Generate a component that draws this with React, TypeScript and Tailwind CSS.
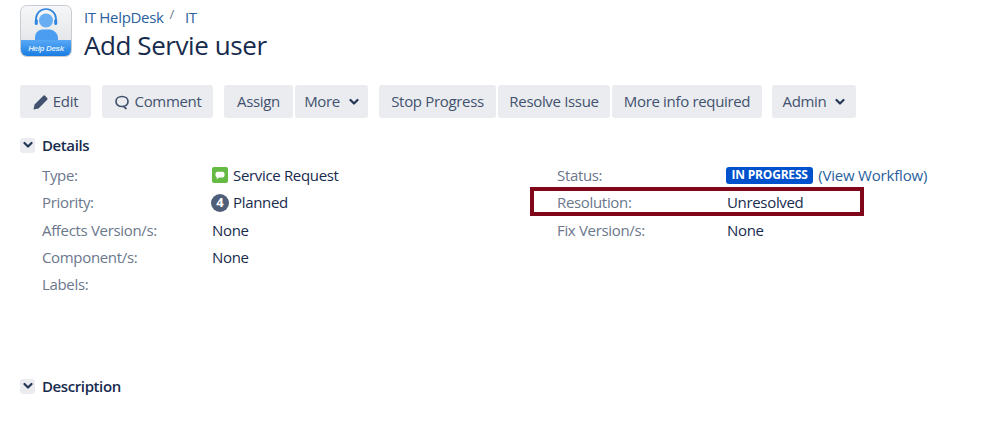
import React from "react";

const Chevron = ({ className = "" }: { className?: string }) => (
  <svg viewBox="0 0 10 8" className={className} fill="none" stroke="currentColor" strokeWidth="2.2" strokeLinecap="round" strokeLinejoin="round">
    <path d="M1.5 2 L5 5.5 L8.5 2" />
  </svg>
);

const Btn = ({ w, children, cls = "" }: { w: string; children: React.ReactNode; cls?: string }) => (
  <div className={`${w} h-[33px] bg-[#ebecf0] rounded-[3px] flex items-center justify-center text-[#42526e] text-[15px] ${cls}`}>{children}</div>
);

const Logo = () => (
  <svg viewBox="0 0 52 52" className="w-[52px] h-[52px] shrink-0">
    <defs>
      <linearGradient id="tile" x1="0" y1="0" x2="0" y2="1">
        <stop offset="0" stopColor="#f6f7f8" />
        <stop offset="1" stopColor="#dcdfe3" />
      </linearGradient>
      <linearGradient id="band" x1="0" y1="0" x2="0" y2="1">
        <stop offset="0" stopColor="#58a9f6" />
        <stop offset="1" stopColor="#1a7ce2" />
      </linearGradient>
    </defs>
    <rect x="0.5" y="0.5" width="51" height="51" rx="6" fill="url(#tile)" stroke="#c9ccd0" />
    <path d="M1 35 H51 V45 a6 6 0 0 1 -6 6 H7 a6 6 0 0 1 -6 -6 Z" fill="url(#band)" />
    <circle cx="26" cy="15.5" r="7" fill="#69aef2" />
    <path d="M16 18 V14 a10 10 0 0 1 20 0 V18" fill="none" stroke="#2f86e2" strokeWidth="1.7" />
    <rect x="14.8" y="14" width="3" height="6" rx="1.5" fill="#2f86e2" />
    <rect x="34.2" y="14" width="3" height="6" rx="1.5" fill="#2f86e2" />
    <path d="M15 35 V32 Q15 26 22 24.5 H30 Q37 26 38 32 V35 Z" fill="#4a9df0" />
    <text x="26" y="46" textAnchor="middle" fontSize="8" fontStyle="italic" fontWeight="700" fill="#d8eafb" fontFamily="'Liberation Sans', sans-serif">Help Desk</text>
  </svg>
);

const Row = ({ label, children, leftW = "w-[170px]" }: { label: string; children?: React.ReactNode; leftW?: string }) => (
  <div className="flex h-[27.3px] items-center">
    <div className={`${leftW} text-[#6b778c]`}>{label}</div>
    <div className="flex items-center text-[#172b4d]">{children}</div>
  </div>
);

const SectionHead = ({ title }: { title: string }) => (
  <div className="flex items-center h-[16px]">
    <div className="w-[15px] h-[15px] rounded-[3px] bg-[#ebecf0] flex items-center justify-center text-[#253858]">
      <Chevron className="w-[10px] h-[8px]" />
    </div>
    <span className="ml-[7px] text-[15px] font-semibold text-[#172b4d] tracking-[-0.4px]">{title}</span>
  </div>
);

export default function App() {
  return (
    <div className="w-[998px] h-[440px] bg-white overflow-hidden pl-5 pt-[5px] text-[15px] font-['Open_Sans','Noto_Sans',sans-serif] tracking-[-0.33px]">
      <div className="flex h-[52px]">
        <Logo />
        <div className="ml-3 flex flex-col">
          <div className="flex items-center h-[22px] mt-[1px] text-[15px] text-[#2a5f9e]">
            <span>IT HelpDesk</span>
            <span className="ml-[6px] text-[#6b778c] text-[13px] -mt-1">/</span>
            <span className="ml-[11px]">IT</span>
          </div>
          <div className="text-[26px] leading-[34px] font-medium text-[#172b4d] tracking-[-0.42px]">Add Servie user</div>
        </div>
      </div>

      <div className="flex mt-[28px] h-[33px]">
        <Btn w="w-[71px]">
          <svg viewBox="0 0 16 16" className="w-[16px] h-[16px] mr-[4px]" fill="#42526e">
            <path d="M0.5 15.5 L1.6 10.5 L10.3 1.8 a1.3 1.3 0 0 1 1.8 0 L14.2 3.9 a1.3 1.3 0 0 1 0 1.8 L5.5 14.4 Z" />
          </svg>
          Edit
        </Btn>
        <Btn w="w-[111px]" cls="ml-[11px]">
          <svg viewBox="0 0 16 16" className="w-[16px] h-[16px] mr-[5px]" fill="none" stroke="#42526e" strokeWidth="1.7" strokeLinecap="round" strokeLinejoin="round">
            <path d="M8 2.5 c3.6 0 6 2.1 6 5 s-2.4 5 -6 5 c-3.6 0 -6 -2.1 -6 -5 s2.4 -5 6 -5 Z M9.5 12.3 L12 14.5" />
          </svg>
          Comment
        </Btn>
        <Btn w="w-[69px]" cls="ml-[11px]">Assign</Btn>
        <Btn w="w-[73px]" cls="ml-[2px]">
          More
          <Chevron className="w-[10px] h-[8px] ml-[9px] text-[#253858]" />
        </Btn>
        <Btn w="w-[117px]" cls="ml-[11px]">Stop Progress</Btn>
        <Btn w="w-[112px]" cls="ml-[2px]">Resolve Issue</Btn>
        <Btn w="w-[150px]" cls="ml-[2px]">More info required</Btn>
        <Btn w="w-[84px]" cls="ml-[10px]">
          Admin
          <Chevron className="w-[10px] h-[8px] ml-[9px] text-[#253858]" />
        </Btn>
      </div>

      <div className="mt-[19px]">
        <SectionHead title="Details" />
      </div>

      <div className="relative flex pl-[22px] mt-[8.6px]">
        <div className="w-[515px]">
          <Row label="Type:">
            <span className="w-[16px] h-[16px] rounded-[2px] bg-[#65ba43] flex items-center justify-center mr-[5px]">
              <svg viewBox="0 0 10 9" className="w-[10px] h-[9px]" fill="#fff">
                <path d="M2.5 0.8 H7.5 a2 2 0 0 1 2 2 V4.5 a2 2 0 0 1 -2 2 H4 L1.8 8.2 V6.3 A2 2 0 0 1 0.5 4.5 V2.8 a2 2 0 0 1 2 -2 Z" />
              </svg>
            </span>
            Service Request
          </Row>
          <Row label="Priority:">
            <span className="w-[18px] h-[18px] -ml-[1px] rounded-full bg-[#505f79] text-white text-[13px] font-bold flex items-center justify-center mr-[4px] tracking-normal">4</span>
            Planned
          </Row>
          <Row label="Affects Version/s:">None</Row>
          <Row label="Component/s:">None</Row>
          <Row label="Labels:" />
        </div>
        <div>
          <Row label="Status:">
            <span className="h-[17px] -ml-[1px] px-[5.5px] rounded-[3px] bg-[#0052cc] text-white text-[12px] font-bold flex items-center tracking-[-0.2px]">IN PROGRESS</span>
            <span className="ml-[5px] text-[#2a5f9e] tracking-[-0.2px]">(View Workflow)</span>
          </Row>
          <Row label="Resolution:">Unresolved</Row>
          <Row label="Fix Version/s:">None</Row>
        </div>
        <div className="absolute left-[510px] top-[25.4px] w-[334px] h-[29px] border-4 border-[#80061a]" />
      </div>

      <div className="mt-[80.4px]">
        <SectionHead title="Description" />
      </div>
    </div>
  );
}
